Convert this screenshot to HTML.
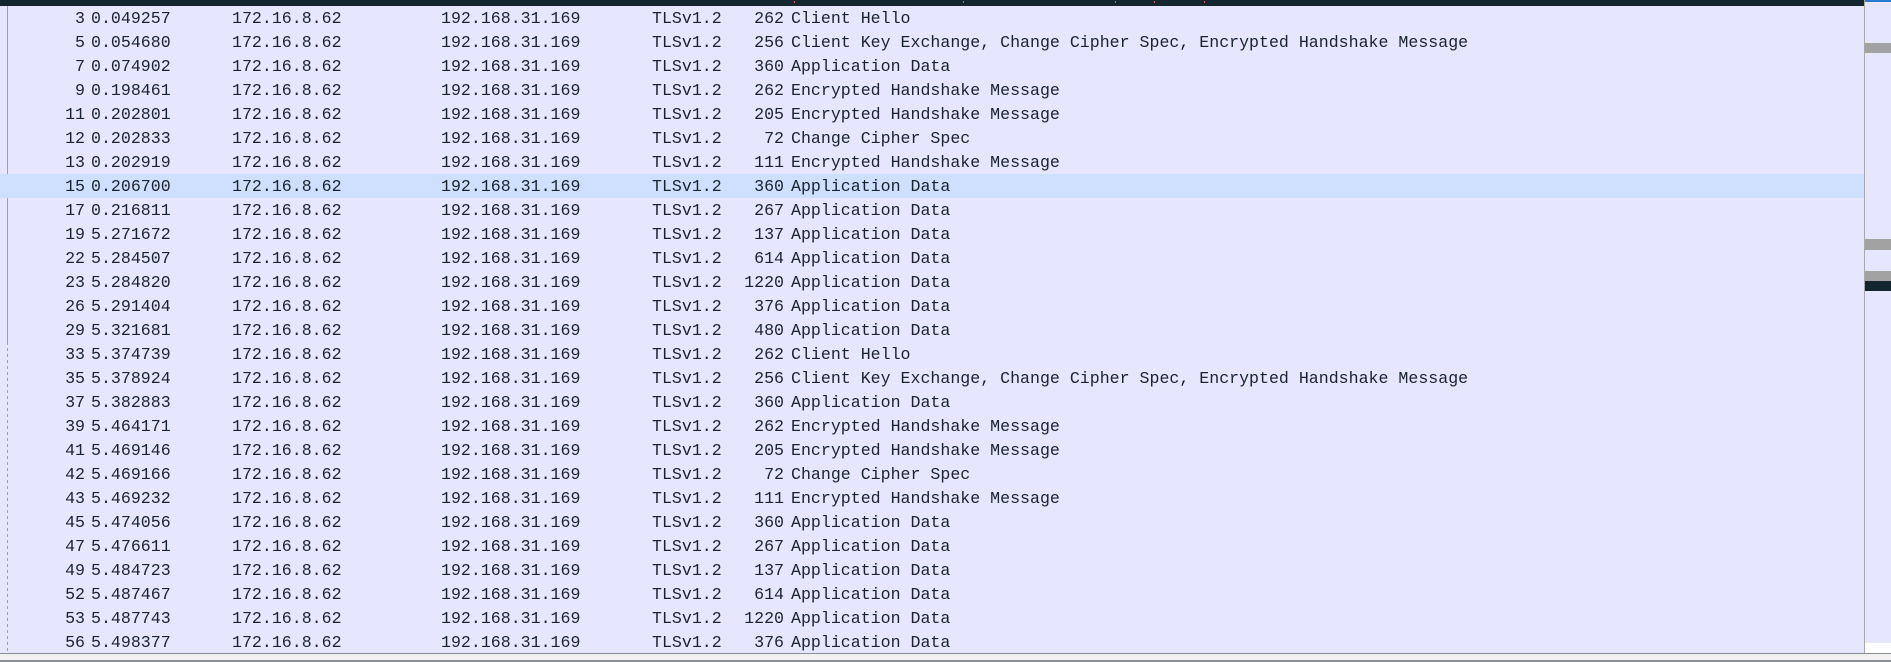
<!DOCTYPE html>
<html><head><meta charset="utf-8"><style>
html,body{margin:0;padding:0;}
body{width:1891px;height:662px;overflow:hidden;background:#e6e6fe;position:relative;font-family:"Liberation Mono",monospace;font-size:16.6px;color:#1a2430;}
.top{position:absolute;left:0;top:0;width:1864px;height:6px;background:#13252e;}
.mk{position:absolute;top:1px;width:1px;height:2px;background:#e05050;}
.sb{position:absolute;left:1864px;top:0;width:27px;height:653px;background:#e6e6fe;border-left:1px solid #a8a8a8;box-sizing:border-box;}
.row{position:absolute;left:0;width:1864px;height:24px;line-height:26px;white-space:pre;}
.row span{position:absolute;top:0;}
.n{right:1779px;text-align:right;}
.t{left:91px}.s{left:232px}.d{left:441px}.p{left:652px}
.l{right:1080px;text-align:right;}
.i{left:791px}
.hl{background:#cfdffe;}
.lline{position:absolute;left:7px;top:6px;width:1px;height:168px;background:#a0a0a0;}
.lline2{position:absolute;left:7px;top:198px;width:1px;height:144px;background:#a0a0a0;}
.ldash{position:absolute;left:7px;top:342px;width:1px;height:311px;background:repeating-linear-gradient(#a0a0a0 0 3px,transparent 3px 6px);}
.bot{position:absolute;left:0;top:653px;width:1891px;height:9px;background:#f0f0f0;border-top:1px solid #8a9098;border-bottom:2px solid #8a9098;box-sizing:border-box;}
</style></head><body>
<div class="top"><div class="mk" style="left:794px"></div><div class="mk" style="left:963px"></div><div class="mk" style="left:1115px"></div><div class="mk" style="left:1154px"></div><div class="mk" style="left:1204px"></div></div>
<div class="sb">
<div style="position:absolute;left:0;top:0;width:26px;height:2px;background:#2a7ad0"></div>
<div style="position:absolute;left:0;top:43px;width:26px;height:10px;background:#a2a2a2"></div>
<div style="position:absolute;left:0;top:239px;width:26px;height:11px;background:#a2a2a2"></div>
<div style="position:absolute;left:0;top:271px;width:26px;height:10px;background:#a2a2a2"></div>
<div style="position:absolute;left:0;top:281px;width:26px;height:10px;background:#13252e"></div>
<div style="position:absolute;left:0;top:643px;width:26px;height:10px;background:#fff"></div>
</div>
<div class="lline"></div><div class="lline2"></div><div class="ldash"></div>
<div class="row" style="top:6px"><span class="n">3</span><span class="t">0.049257</span><span class="s">172.16.8.62</span><span class="d">192.168.31.169</span><span class="p">TLSv1.2</span><span class="l">262</span><span class="i">Client Hello</span></div>
<div class="row" style="top:30px"><span class="n">5</span><span class="t">0.054680</span><span class="s">172.16.8.62</span><span class="d">192.168.31.169</span><span class="p">TLSv1.2</span><span class="l">256</span><span class="i">Client Key Exchange, Change Cipher Spec, Encrypted Handshake Message</span></div>
<div class="row" style="top:54px"><span class="n">7</span><span class="t">0.074902</span><span class="s">172.16.8.62</span><span class="d">192.168.31.169</span><span class="p">TLSv1.2</span><span class="l">360</span><span class="i">Application Data</span></div>
<div class="row" style="top:78px"><span class="n">9</span><span class="t">0.198461</span><span class="s">172.16.8.62</span><span class="d">192.168.31.169</span><span class="p">TLSv1.2</span><span class="l">262</span><span class="i">Encrypted Handshake Message</span></div>
<div class="row" style="top:102px"><span class="n">11</span><span class="t">0.202801</span><span class="s">172.16.8.62</span><span class="d">192.168.31.169</span><span class="p">TLSv1.2</span><span class="l">205</span><span class="i">Encrypted Handshake Message</span></div>
<div class="row" style="top:126px"><span class="n">12</span><span class="t">0.202833</span><span class="s">172.16.8.62</span><span class="d">192.168.31.169</span><span class="p">TLSv1.2</span><span class="l">72</span><span class="i">Change Cipher Spec</span></div>
<div class="row" style="top:150px"><span class="n">13</span><span class="t">0.202919</span><span class="s">172.16.8.62</span><span class="d">192.168.31.169</span><span class="p">TLSv1.2</span><span class="l">111</span><span class="i">Encrypted Handshake Message</span></div>
<div class="row hl" style="top:174px"><span class="n">15</span><span class="t">0.206700</span><span class="s">172.16.8.62</span><span class="d">192.168.31.169</span><span class="p">TLSv1.2</span><span class="l">360</span><span class="i">Application Data</span></div>
<div class="row" style="top:198px"><span class="n">17</span><span class="t">0.216811</span><span class="s">172.16.8.62</span><span class="d">192.168.31.169</span><span class="p">TLSv1.2</span><span class="l">267</span><span class="i">Application Data</span></div>
<div class="row" style="top:222px"><span class="n">19</span><span class="t">5.271672</span><span class="s">172.16.8.62</span><span class="d">192.168.31.169</span><span class="p">TLSv1.2</span><span class="l">137</span><span class="i">Application Data</span></div>
<div class="row" style="top:246px"><span class="n">22</span><span class="t">5.284507</span><span class="s">172.16.8.62</span><span class="d">192.168.31.169</span><span class="p">TLSv1.2</span><span class="l">614</span><span class="i">Application Data</span></div>
<div class="row" style="top:270px"><span class="n">23</span><span class="t">5.284820</span><span class="s">172.16.8.62</span><span class="d">192.168.31.169</span><span class="p">TLSv1.2</span><span class="l">1220</span><span class="i">Application Data</span></div>
<div class="row" style="top:294px"><span class="n">26</span><span class="t">5.291404</span><span class="s">172.16.8.62</span><span class="d">192.168.31.169</span><span class="p">TLSv1.2</span><span class="l">376</span><span class="i">Application Data</span></div>
<div class="row" style="top:318px"><span class="n">29</span><span class="t">5.321681</span><span class="s">172.16.8.62</span><span class="d">192.168.31.169</span><span class="p">TLSv1.2</span><span class="l">480</span><span class="i">Application Data</span></div>
<div class="row" style="top:342px"><span class="n">33</span><span class="t">5.374739</span><span class="s">172.16.8.62</span><span class="d">192.168.31.169</span><span class="p">TLSv1.2</span><span class="l">262</span><span class="i">Client Hello</span></div>
<div class="row" style="top:366px"><span class="n">35</span><span class="t">5.378924</span><span class="s">172.16.8.62</span><span class="d">192.168.31.169</span><span class="p">TLSv1.2</span><span class="l">256</span><span class="i">Client Key Exchange, Change Cipher Spec, Encrypted Handshake Message</span></div>
<div class="row" style="top:390px"><span class="n">37</span><span class="t">5.382883</span><span class="s">172.16.8.62</span><span class="d">192.168.31.169</span><span class="p">TLSv1.2</span><span class="l">360</span><span class="i">Application Data</span></div>
<div class="row" style="top:414px"><span class="n">39</span><span class="t">5.464171</span><span class="s">172.16.8.62</span><span class="d">192.168.31.169</span><span class="p">TLSv1.2</span><span class="l">262</span><span class="i">Encrypted Handshake Message</span></div>
<div class="row" style="top:438px"><span class="n">41</span><span class="t">5.469146</span><span class="s">172.16.8.62</span><span class="d">192.168.31.169</span><span class="p">TLSv1.2</span><span class="l">205</span><span class="i">Encrypted Handshake Message</span></div>
<div class="row" style="top:462px"><span class="n">42</span><span class="t">5.469166</span><span class="s">172.16.8.62</span><span class="d">192.168.31.169</span><span class="p">TLSv1.2</span><span class="l">72</span><span class="i">Change Cipher Spec</span></div>
<div class="row" style="top:486px"><span class="n">43</span><span class="t">5.469232</span><span class="s">172.16.8.62</span><span class="d">192.168.31.169</span><span class="p">TLSv1.2</span><span class="l">111</span><span class="i">Encrypted Handshake Message</span></div>
<div class="row" style="top:510px"><span class="n">45</span><span class="t">5.474056</span><span class="s">172.16.8.62</span><span class="d">192.168.31.169</span><span class="p">TLSv1.2</span><span class="l">360</span><span class="i">Application Data</span></div>
<div class="row" style="top:534px"><span class="n">47</span><span class="t">5.476611</span><span class="s">172.16.8.62</span><span class="d">192.168.31.169</span><span class="p">TLSv1.2</span><span class="l">267</span><span class="i">Application Data</span></div>
<div class="row" style="top:558px"><span class="n">49</span><span class="t">5.484723</span><span class="s">172.16.8.62</span><span class="d">192.168.31.169</span><span class="p">TLSv1.2</span><span class="l">137</span><span class="i">Application Data</span></div>
<div class="row" style="top:582px"><span class="n">52</span><span class="t">5.487467</span><span class="s">172.16.8.62</span><span class="d">192.168.31.169</span><span class="p">TLSv1.2</span><span class="l">614</span><span class="i">Application Data</span></div>
<div class="row" style="top:606px"><span class="n">53</span><span class="t">5.487743</span><span class="s">172.16.8.62</span><span class="d">192.168.31.169</span><span class="p">TLSv1.2</span><span class="l">1220</span><span class="i">Application Data</span></div>
<div class="row" style="top:630px"><span class="n">56</span><span class="t">5.498377</span><span class="s">172.16.8.62</span><span class="d">192.168.31.169</span><span class="p">TLSv1.2</span><span class="l">376</span><span class="i">Application Data</span></div>
<div class="bot"></div>
</body></html>
